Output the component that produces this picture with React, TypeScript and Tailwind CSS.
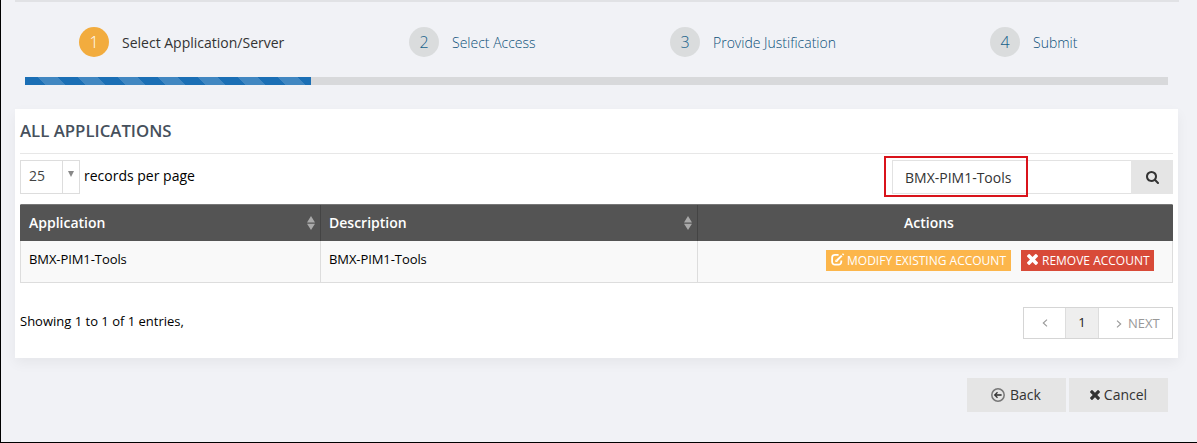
import React from "react";

const STEPS = [
  { n: 1, label: "Select Application/Server", active: true, pos: "w-[330px]" },
  { n: 2, label: "Select Access", active: false, pos: "w-[261px]" },
  { n: 3, label: "Provide Justification", active: false, pos: "w-[320px]" },
  { n: 4, label: "Submit", active: false, pos: "w-[120px]" },
];

function TimesIcon({ className }: { className: string }) {
  return (
    <svg viewBox="302 366 1188 1188" fill="currentColor" className={className}>
      <path d="M1490 1322q0 40-28 68l-136 136q-28 28-68 28t-68-28l-294-294-294 294q-28 28-68 28t-68-28l-136-136q-28-28-28-68t28-68l294-294-294-294q-28-28-28-68t28-68l136-136q28-28 68-28t68 28l294 294 294-294q28-28 68-28t68 28l136 136q28 28 28 68t-28 68l-294 294 294 294q28 28 28 68z" />
    </svg>
  );
}

function SearchIcon() {
  return (
    <svg viewBox="64 128 1664 1664" fill="currentColor" className="size-[13px]">
      <path d="M1216 832q0-185-131.5-316.5t-316.5-131.5-316.5 131.5-131.5 316.5 131.5 316.5 316.5 131.5 316.5-131.5 131.5-316.5zm512 832q0 52-38 90t-90 38q-54 0-90-38l-343-342q-179 124-399 124-143 0-273.5-55.5t-225-150-150-225-55.5-273.5 55.5-273.5 150-225 225-150 273.5-55.5 273.5 55.5 225 150 150 225 55.5 273.5q0 220-124 399l343 343q37 37 37 90z" />
    </svg>
  );
}

function EditIcon() {
  return (
    <svg viewBox="0 0 14 13" fill="none" stroke="currentColor" className="mb-[2px] h-[13px] w-[14px] shrink-0">
      <path d="M7.6 1.9H3.9A2.8 2.8 0 0 0 1.1 4.7V8.8A2.8 2.8 0 0 0 3.9 11.6H7.5A2.8 2.8 0 0 0 10.3 8.8V7.6" strokeWidth="1.8" />
      <path d="M5.6 7.8L10.8 2.6" strokeWidth="2" />
      <path d="M4.3 9.1V6.5L6.9 9.1Z" fill="currentColor" stroke="none" />
      <path d="M11.6 1.8L12.6 .8" strokeWidth="1.9" />
    </svg>
  );
}

function BackIcon() {
  return (
    <svg viewBox="0 0 14 14" fill="none" stroke="currentColor" className="size-[14px]">
      <circle cx="7" cy="7" r="6.2" strokeWidth="1.5" className="text-[#777]" />
      <path d="M3.8 7H10.6" strokeWidth="1.6" />
      <path d="M6.5 4.3L3.8 7L6.5 9.7" strokeWidth="1.3" />
    </svg>
  );
}

function Chevron({ d }: { d: string }) {
  return (
    <svg viewBox="0 0 6 8" fill="none" stroke="currentColor" className="h-2 w-1.5">
      <path d={d} strokeWidth="1.1" />
    </svg>
  );
}

function SortIcon() {
  return (
    <svg viewBox="0 0 8 14" fill="#a9a9a9" className="h-[14px] w-2">
      <path d="M4 0L8 6.4H0ZM0 7.8H8L4 14Z" />
    </svg>
  );
}

export default function App() {
  return (
    <div className="flex h-[443px] w-[1197px] flex-col overflow-hidden border-b border-l border-black bg-[#f1f2f6] font-['Open_Sans','Noto_Sans',sans-serif] text-[14px] text-black">
      <div className="mr-[18px] ml-[14px] h-[2px] shrink-0 bg-[#e1e2e5]" />
      <nav className="mt-[25px] ml-[78px] flex h-[30px] shrink-0">
        {STEPS.map((s) => (
          <div key={s.n} className={`flex shrink-0 items-center ${s.pos}`}>
            <span
              className={
                s.active
                  ? "flex size-[30px] items-center justify-center rounded-full bg-[#f2ac3e] pb-px text-[16px] font-light text-white"
                  : "flex size-[30px] items-center justify-center rounded-full bg-[#dadcdd] pb-px text-[16px] font-[350] text-[#15608a]"
              }
            >
              {s.n}
            </span>
            <span
              className={
                s.active
                  ? "ml-[13px] pt-px whitespace-nowrap text-[#333]"
                  : "ml-[13px] pt-px font-light whitespace-nowrap text-[#0b5079]"
              }
            >
              {s.label}
            </span>
          </div>
        ))}
      </nav>
      <div className="mt-5 ml-6 h-2 w-[1143px] shrink-0 bg-[#d8d9db]">
        <div className="h-full w-[286px] bg-[#1b6fb5] bg-[linear-gradient(45deg,rgba(255,255,255,.17)_25%,transparent_25%,transparent_50%,rgba(255,255,255,.17)_50%,rgba(255,255,255,.17)_75%,transparent_75%)] bg-[length:40px_40px] bg-[position:13px_0]" />
      </div>

      <section className="mt-6 ml-[14px] flex h-[249px] w-[1163px] shrink-0 flex-col bg-white px-[5px] shadow-[0_5px_12px_rgba(0,0,0,0.05)]">
        <h2 className="flex h-[45px] shrink-0 items-center border-b border-[#e7e7e7] pb-px text-[16.8px] font-semibold text-[#46505c]">
          ALL APPLICATIONS
        </h2>
        <div className="mt-[6px] flex h-[34px] shrink-0 items-center">
          <div className="flex h-[34px] w-[60px] border border-[#ddd] text-[#444]">
            <span className="flex w-[41px] items-center pb-[3px] pl-2">25</span>
            <span className="flex flex-1 justify-center border-l border-[#ddd] pt-[10px]">
              <svg viewBox="0 0 6 6" className="-ml-px size-1.5" fill="#888">
                <path d="M0 0H6L3 6Z" />
              </svg>
            </span>
          </div>
          <span className="ml-[4px] pb-[3px]">records per page</span>
          <div className="relative ml-auto flex h-[34px] w-[281px]">
            <div className="flex w-[239px] items-center border border-r-0 border-[#e2e2e2] pl-3 text-[#333]">
              BMX-PIM1-Tools
            </div>
            <div className="flex flex-1 items-center justify-center bg-[#e5e5e5] text-[#333]">
              <SearchIcon />
            </div>
            <div className="absolute top-[-4px] left-[-8px] h-[41px] w-[144px] border-2 border-[#d9131b]" />
          </div>
        </div>

        <div className="mt-[10px] grid h-[79px] w-[1153px] shrink-0 grid-cols-[300px_377px_1fr] grid-rows-[36px_42px] border border-b-0 border-[#ddd] border-t-[#777]">
          <div className="-ml-px flex items-center justify-between border-r border-[#444] bg-[#545454] pr-[5px] pb-px pl-[9px] font-semibold text-white">
            Application
            <SortIcon />
          </div>
          <div className="flex items-center justify-between border-r border-[#444] bg-[#545454] pr-[5px] pb-px pl-2 font-semibold text-white">
            Description
            <SortIcon />
          </div>
          <div className="-mr-px flex items-center bg-[#545454] pb-px pl-[206px] font-semibold text-white">Actions</div>
          <div className="border-r border-b border-[#ddd] bg-[#f9f9f9] pt-[9px] pl-2 text-[13px] tracking-[-0.08px]">BMX-PIM1-Tools</div>
          <div className="border-r border-b border-[#ddd] bg-[#f9f9f9] pt-[9px] pl-2 text-[13px] tracking-[-0.08px]">BMX-PIM1-Tools</div>
          <div className="flex items-start justify-end gap-[10px] border-b border-[#ddd] bg-[#f9f9f9] pt-[9px] pr-[18px] text-[12px] text-white">
            <span className="flex h-[21px] w-[185px] items-center gap-0.5 bg-[#fcb64b] pl-[5px] whitespace-nowrap">
              <EditIcon />
              MODIFY EXISTING ACCOUNT
            </span>
            <span className="flex h-[21px] w-[133px] items-center gap-1 bg-[#d84a38] pl-[6px] whitespace-nowrap">
              <TimesIcon className="mb-[2px] size-[11px] shrink-0" />
              REMOVE ACCOUNT
            </span>
          </div>
        </div>

        <div className="mt-6 flex h-8 shrink-0 justify-between text-[13px]">
          <span className="pt-[5px]">Showing 1 to 1 of 1 entries,</span>
          <div className="flex h-8 w-[150px] border border-[#d5d5d5] text-[#999]">
            <span className="flex w-[41px] items-center justify-center">
              <Chevron d="M5 .7L1.3 4L5 7.3" />
            </span>
            <span className="flex w-[34px] items-center justify-center border-x border-[#ddd] bg-[#eee] text-[#222]">1</span>
            <span className="flex flex-1 items-center gap-[6px] pt-px pl-[17px]">
              <Chevron d="M1 .7L4.7 4L1 7.3" />
              NEXT
            </span>
          </div>
        </div>
      </section>

      <div className="mt-5 mr-[29px] flex h-[34px] shrink-0 justify-end gap-[3px] text-[#333]">
        <button className="flex w-[99px] items-center justify-center gap-[5px] bg-[#e5e5e5] pr-px pb-px">
          <BackIcon />
          Back
        </button>
        <button className="flex w-[99px] items-center justify-center gap-1 bg-[#e5e5e5] pb-px">
          <TimesIcon className="size-[10px]" />
          Cancel
        </button>
      </div>
    </div>
  );
}
